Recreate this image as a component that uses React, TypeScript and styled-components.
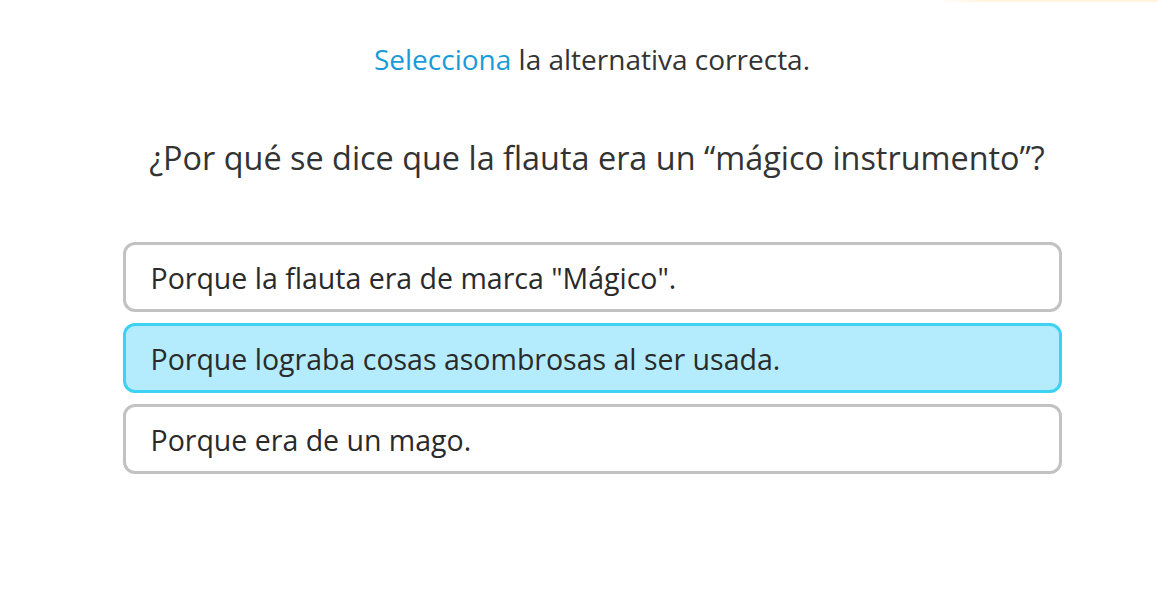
import React from "react";
import styled, { createGlobalStyle } from "styled-components";

const Global = createGlobalStyle`
  html, body { margin: 0; padding: 0; background: #ffffff; }
  body { font-family: "Open Sans", "Noto Sans", sans-serif; color: #333333; }
`;

const Page = styled.div`
  position: relative;
  width: 1158px;
  height: 593px;
  display: flex;
  flex-direction: column;
  align-items: center;
  box-sizing: border-box;
  padding-top: 38px;
  padding-left: 26px;
`;

const TopAccent = styled.div`
  position: absolute;
  top: 0;
  right: 0;
  width: 220px;
  height: 2px;
  background: linear-gradient(90deg, rgba(255, 240, 210, 0), #fff4de 20%, #fff4de);
`;

const Instruction = styled.p`
  margin: 0;
  font-size: 28px;
  line-height: 42px;
  color: #333333;
`;

const Highlight = styled.span`
  color: #1a9bd7;
`;

const Question = styled.h2`
  margin: 55px 0 0;
  font-weight: 400;
  font-size: 32.4px;
  line-height: 44px;
  color: #333333;
  padding-left: 10px;
`;

const Options = styled.div`
  margin-top: 63px;
  width: 939px;
  display: flex;
  flex-direction: column;
  gap: 11px;
`;

const Option = styled.div<{ $selected?: boolean }>`
  box-sizing: border-box;
  height: 70px;
  display: flex;
  align-items: center;
  padding: 1px 25px 0;
  border: 3px solid ${(p) => (p.$selected ? "#3dd2f3" : "#c2c2c2")};
  border-radius: 12px;
  background: ${(p) => (p.$selected ? "#b4ecfe" : "#ffffff")};
  font-size: 28.5px;
  color: #2a2a2a;
`;

const options = [
  { text: 'Porque la flauta era de marca "Mágico".', selected: false },
  { text: "Porque lograba cosas asombrosas al ser usada.", selected: true },
  { text: "Porque era de un mago.", selected: false },
];

export default function App() {
  return (
    <>
      <Global />
      <Page>
        <TopAccent />
        <Instruction>
          <Highlight>Selecciona</Highlight> la alternativa correcta.
        </Instruction>
        <Question>¿Por qué se dice que la flauta era un “mágico instrumento”?</Question>
        <Options>
          {options.map((o) => (
            <Option key={o.text} $selected={o.selected}>
              {o.text}
            </Option>
          ))}
        </Options>
      </Page>
    </>
  );
}
